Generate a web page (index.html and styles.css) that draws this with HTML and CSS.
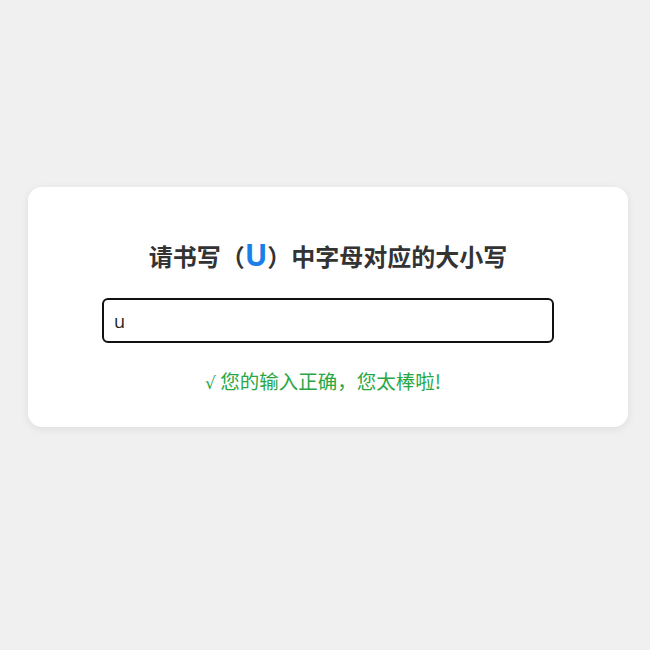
FILE: index.html
```html
<!DOCTYPE html>
<html lang="zh">
<head>
<meta charset="utf-8">
<title>大小写</title>
<link rel="stylesheet" href="styles.css">
</head>
<body>
<div class="card">
  <h2 class="title">请书写（<span class="letter">U</span>）中字母对应的大小写</h2>
  <input class="answer" type="text" value="u">
  <p class="msg"><span class="check">√</span> 您的输入正确，您太棒啦!</p>
</div>
</body>
</html>
```
FILE: styles.css
```css
html, body {
  margin: 0;
  padding: 0;
  background: #f0f0f0;
  font-family: "Noto Sans CJK SC", "Noto Sans", sans-serif;
}
body {
  height: 650px;
  display: flex;
  align-items: flex-start;
}
.card {
  box-sizing: border-box;
  width: 600px;
  margin: 187px 0 0 28px;
  background: #fff;
  border-radius: 14px;
  box-shadow: 0 2px 8px rgba(0,0,0,0.08);
  padding: 50px 74px 30px;
  display: flex;
  flex-direction: column;
  align-items: center;
}
.title {
  margin: 0;
  font-size: 24px;
  line-height: 36px;
  font-weight: bold;
  color: #333;
}
.letter {
  color: #1a7fe8;
  font-size: 30px;
  font-family: "Open Sans", "Noto Sans", sans-serif;
}
.answer {
  box-sizing: border-box;
  width: 452px;
  height: 45px;
  margin-top: 24px;
  border: 2px solid #111;
  border-radius: 6px;
  padding: 0 10px;
  font-size: 18px;
  font-family: "Open Sans", "Noto Sans", sans-serif;
  color: #222;
  outline: none;
}
.msg {
  margin: 24px 0 0;
  padding-right: 10px;
  font-size: 19.5px;
  line-height: 28px;
  color: #28a745;
}
.check {
  font-family: "DejaVu Sans", sans-serif;
  font-size: 17px;
}
```
